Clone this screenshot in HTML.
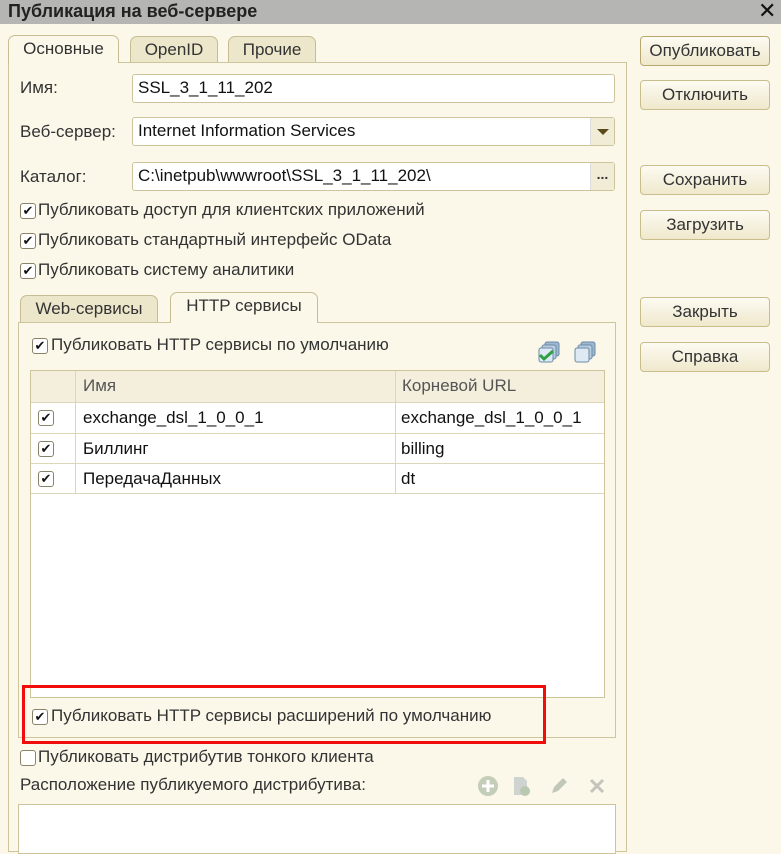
<!DOCTYPE html>
<html><head><meta charset="utf-8"><style>
*{box-sizing:border-box;margin:0;padding:0}
body{width:781px;height:844px;overflow:hidden;background:#fbf8ea;font-family:"Liberation Sans","DejaVu Sans",sans-serif;font-size:17px;color:#333;position:relative}
.a{position:absolute;white-space:nowrap}
.title{left:0;top:0;width:781px;height:24px;background:#b5b5b3;font-weight:bold;font-size:18px;color:#222;padding:1px 0 0 8px}
.tab{border:1px solid #c8bd92;border-bottom:none;border-radius:7px 7px 0 0;background:#ece6cb;text-align:center;padding-top:3px;color:#333}
.tab.on{background:#fbf8ea}
.panel{border:1px solid #cfc59c}
.inp{background:#fff;border:1px solid #cdc49c;border-radius:3px;padding:3px 0 0 5px;color:#111}
.btn{border:1px solid #c9bd8c;border-radius:4px;background:linear-gradient(#fdfbf2,#efe8cc);text-align:center;padding-top:4px;width:130px;height:30px;color:#333}
.cb{width:16px;height:16px;border:1px solid #8a836a;border-radius:3px;background:#fff;font-size:13px;line-height:14px;text-align:center;color:#111}
.lbl{color:#333}
.tbl{background:#fff;border:1px solid #cdc49c}
.hl{border-bottom:1px solid #ddd6b8}
</style></head><body>
<div class="a title">Публикация на веб-сервере</div>
<div class="a" style="left:758px;top:-2px;font-size:22px;color:#111">✕</div>

<div class="a panel" style="left:8px;top:62px;width:619px;height:790px"></div>
<div class="a tab on" style="left:8px;top:35px;width:111px;height:28px">Основные</div>
<div class="a tab" style="left:130px;top:36px;width:88px;height:26px">OpenID</div>
<div class="a tab" style="left:228px;top:36px;width:88px;height:26px">Прочие</div>

<div class="a lbl" style="left:20px;top:78px">Имя:</div>
<div class="a inp" style="left:132px;top:74px;width:483px;height:29px">SSL_3_1_11_202</div>
<div class="a lbl" style="left:20px;top:122px">Веб-сервер:</div>
<div class="a inp" style="left:132px;top:117px;width:483px;height:29px">Internet Information Services</div>
<div class="a" style="left:590px;top:118px;width:24px;height:27px;background:#f1ecd6;border-left:1px solid #ddd"></div>
<div class="a" style="left:597px;top:129px;border-left:6px solid transparent;border-right:6px solid transparent;border-top:6px solid #5a4a1a"></div>
<div class="a lbl" style="left:20px;top:167px">Каталог:</div>
<div class="a inp" style="left:132px;top:162px;width:483px;height:29px">C:\inetpub\wwwroot\SSL_3_1_11_202\</div>
<div class="a" style="left:590px;top:163px;width:24px;height:27px;background:#f1ecd6;border-left:1px solid #ddd;text-align:center;font-weight:bold;font-size:14px;line-height:22px">...</div>

<div class="a cb" style="left:20px;top:203px">✔</div><div class="a lbl" style="left:38px;top:200px">Публиковать доступ для клиентских приложений</div>
<div class="a cb" style="left:20px;top:233px">✔</div><div class="a lbl" style="left:38px;top:230px">Публиковать стандартный интерфейс OData</div>
<div class="a cb" style="left:20px;top:263px">✔</div><div class="a lbl" style="left:38px;top:260px">Публиковать систему аналитики</div>

<div class="a panel" style="left:18px;top:322px;width:598px;height:416px"></div>
<div class="a tab" style="left:20px;top:295px;width:138px;height:27px">Web-сервисы</div>
<div class="a tab on" style="left:170px;top:292px;width:148px;height:31px">HTTP сервисы</div>

<div class="a cb" style="left:32px;top:338px">✔</div><div class="a lbl" style="left:51px;top:335px">Публиковать HTTP сервисы по умолчанию</div>
<svg class="a" style="left:537px;top:341px" width="26" height="24"><rect x="8" y="1" width="14" height="14" rx="2" fill="#9fb8d0" stroke="#6a8aa8"/><rect x="5" y="4" width="14" height="14" rx="2" fill="#b8cde0" stroke="#6a8aa8"/><rect x="2" y="7" width="14" height="14" rx="2" fill="#dfe9f3" stroke="#6a8aa8"/><path d="M3 14l4 4 9-8" stroke="#2ea043" stroke-width="3" fill="none"/></svg>
<svg class="a" style="left:573px;top:341px" width="26" height="24"><rect x="8" y="1" width="14" height="14" rx="2" fill="#9fb8d0" stroke="#6a8aa8"/><rect x="5" y="4" width="14" height="14" rx="2" fill="#b8cde0" stroke="#6a8aa8"/><rect x="2" y="7" width="14" height="14" rx="2" fill="#dfe9f3" stroke="#6a8aa8"/></svg>

<div class="a tbl" style="left:30px;top:370px;width:575px;height:328px"></div>
<div class="a" style="left:31px;top:371px;width:573px;height:32px;background:#f3efdc;border-bottom:1px solid #ddd6b8"></div>
<div class="a" style="left:75px;top:371px;width:1px;height:123px;background:#ddd6b8"></div>
<div class="a" style="left:395px;top:371px;width:1px;height:123px;background:#ddd6b8"></div>
<div class="a" style="left:83px;top:376px;color:#555">Имя</div>
<div class="a" style="left:402px;top:376px;color:#555">Корневой URL</div>
<div class="a hl" style="left:31px;top:403px;width:573px;height:31px"></div>
<div class="a hl" style="left:31px;top:434px;width:573px;height:30px"></div>
<div class="a hl" style="left:31px;top:464px;width:573px;height:30px"></div>
<div class="a cb" style="left:38px;top:410px">✔</div><div class="a" style="left:83px;top:408px;color:#111">exchange_dsl_1_0_0_1</div><div class="a" style="left:401px;top:408px;color:#111">exchange_dsl_1_0_0_1</div>
<div class="a cb" style="left:38px;top:441px">✔</div><div class="a" style="left:83px;top:439px;color:#111">Биллинг</div><div class="a" style="left:401px;top:439px;color:#111">billing</div>
<div class="a cb" style="left:38px;top:471px">✔</div><div class="a" style="left:83px;top:469px;color:#111">ПередачаДанных</div><div class="a" style="left:401px;top:469px;color:#111">dt</div>

<div class="a" style="left:22px;top:685px;width:524px;height:59px;border:3px solid #f20d0d"></div>
<div class="a cb" style="left:32px;top:709px">✔</div><div class="a lbl" style="left:51px;top:706px">Публиковать HTTP сервисы расширений по умолчанию</div>

<div class="a cb" style="left:20px;top:750px"></div><div class="a lbl" style="left:38px;top:747px">Публиковать дистрибутив тонкого клиента</div>
<div class="a lbl" style="left:20px;top:775px">Расположение публикуемого дистрибутива:</div>
<svg class="a" style="left:476px;top:774px" width="135" height="24"><circle cx="12" cy="12" r="10" fill="#c4cdb8"/><path d="M12 6v12M6 12h12" stroke="#fff" stroke-width="3"/><path d="M38 3h9l4 4v14h-13z" fill="#cfd4d0"/><circle cx="49" cy="17" r="5" fill="#b9c8b0"/><path d="M76 19l2-6 9-9 4 4-9 9z" fill="#c1c8b8"/><path d="M115 6l12 12M127 6l-12 12" stroke="#c4c4bc" stroke-width="3"/></svg>
<div class="a" style="left:18px;top:804px;width:598px;height:50px;background:#fff;border:1px solid #cdc49c"></div>

<div class="a btn" style="left:640px;top:36px;border-color:#b8a870">Опубликовать</div>
<div class="a btn" style="left:640px;top:80px">Отключить</div>
<div class="a btn" style="left:640px;top:165px">Сохранить</div>
<div class="a btn" style="left:640px;top:210px">Загрузить</div>
<div class="a btn" style="left:640px;top:297px">Закрыть</div>
<div class="a btn" style="left:640px;top:342px">Справка</div>
</body></html>
